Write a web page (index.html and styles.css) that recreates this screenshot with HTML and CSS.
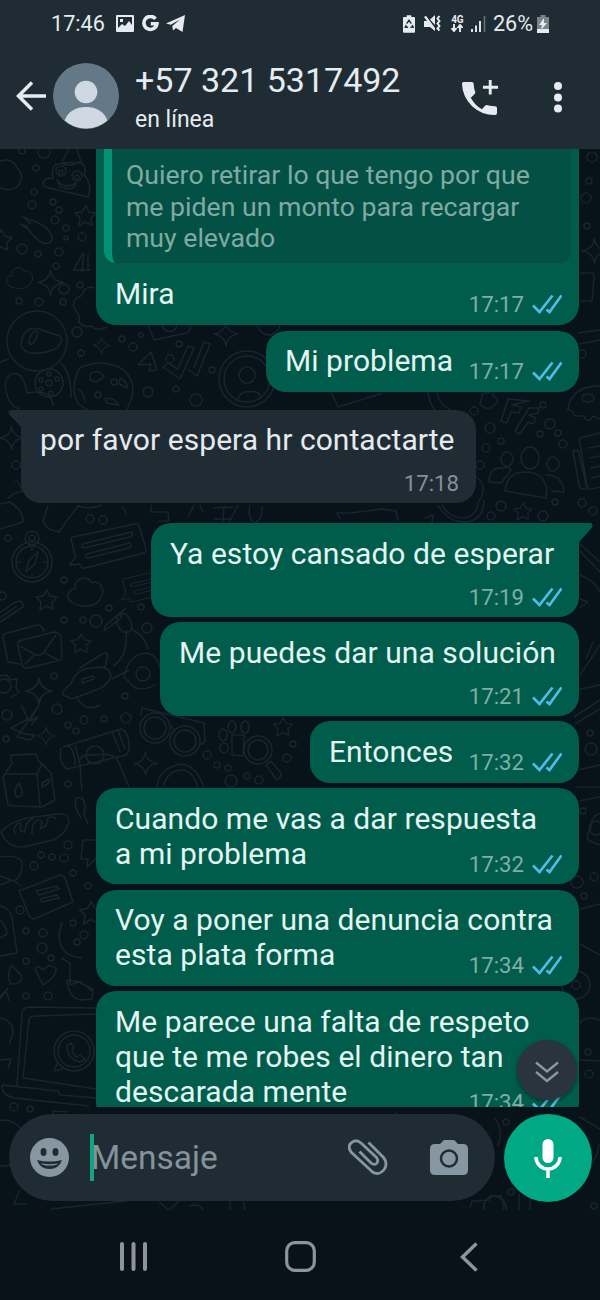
FILE: index.html
```html
<!DOCTYPE html>
<html lang="es">
<head>
<meta charset="utf-8">
<title>Chat</title>
<link rel="stylesheet" href="styles.css">
</head>
<body>
<svg class="defs" width="0" height="0" aria-hidden="true">
  <defs>
    <symbol id="ticks" viewBox="0 0 30 20"><path d="M1 11.500 7.500 18 20.500 1.500M14.500 15.500l3 2.500L29.500 1.500" fill="none" stroke="currentColor" stroke-width="2.700"/></symbol>
    <symbol id="spark" viewBox="-12 -12 24 24" overflow="visible"><path d="M0-12Q1-2 12 0Q1 2 0 12Q-1 2-12 0Q-1-2 0-12Z"/></symbol>
    <symbol id="star" viewBox="-10 -10 20 20" overflow="visible"><path d="M1-10 4-4 11-3 6 2 7 9 0 6-6 10-5 2-10-3-3-4Z"/></symbol>
    <symbol id="cloud" viewBox="0 0 38 32" overflow="visible"><path d="M8 28C-3 25-1 12 8 12 6 1 21-3 25 6 36 3 39 17 34 22 29 31 17 32 8 28Z"/></symbol>
    <symbol id="note" viewBox="0 0 80 48" overflow="visible"><path d="M6 14Q3 14 4 18L8 34 2 42 12 41Q14 46 18 45L76 30Q80 29 78 24L72 4Q71 0 67 1ZM15 21 64 9Q67 13 62 14L17 25Q12 24 15 21ZM19 31 62 20Q66 23 61 25L21 35Q16 34 19 31Z"/></symbol>
    <symbol id="compass" viewBox="0 0 40 50" overflow="visible"><circle cx="20" cy="30" r="20"/><circle cx="20" cy="30" r="16"/><circle cx="20" cy="6" r="7"/><circle cx="20" cy="6" r="3"/><path d="M26 20 23 32 14 40 17 28ZM20 15v4M20 41v4M5 30h4M31 30h4"/></symbol>
  </defs>
</svg>
<div class="phone">
  <header class="top">
    <div class="status">
      <div class="status-left">
        <span>17:46</span>
        <svg width="18" height="17" viewBox="0 0 18 17"><path fill="currentColor" fill-rule="evenodd" d="M1 0h16q1 0 1 1v15q0 1-1 1H1q-1 0-1-1V1Q0 0 1 0ZM2 2v11l4-4 3 2 4-5 3 4V2ZM4 4h3v3H4Z"/></svg>
        <svg class="g-icon" width="17" height="17" viewBox="0 0 17 17"><path fill="none" stroke="currentColor" stroke-width="3.600" d="M13.500 3.800A6.500 6.500 0 1 0 14.900 8.800H8.800"/></svg>
        <svg class="plane" width="19" height="17" viewBox="0 0 19 17"><path fill="currentColor" d="M0 8.500 19 0 16.500 17 10 13 7 15.500 6.300 11 14 4.500 4.800 9.800Z"/></svg>
      </div>
      <div class="status-right">
        <svg width="12" height="18" viewBox="0 0 13 19"><path fill="currentColor" d="M4 0h5v2h3q1 0 1 1v15q0 1-1 1H1q-1 0-1-1V3q0-1 1-1h3Z"/><path fill="none" stroke="#202c33" stroke-width="1.500" d="M4 9 6.500 5.500 9 9M10 10.500 11 13H8M5.500 13H2.500L3.500 10.500"/></svg>
        <svg class="mute" width="18" height="18" viewBox="0 0 18 18"><path fill="currentColor" d="M0 6h3L0 2 2 .8 11 13V16L6 12H0ZM6 4.500 11 0V10Z"/><path d="m15.500 1-2 2.500 2 2.500-2 2.500 2 2.500-2 2.500 2 2" fill="none" stroke="currentColor" stroke-width="2"/></svg>
        <div class="network"><span>4G</span><svg width="12" height="8" viewBox="0 0 12 8"><path d="M3 0v6M.5 4 3 7 5.500 4M9 8V2M6.500 4 9 1l2.500 3" fill="none" stroke="currentColor" stroke-width="1.900"/></svg></div>
        <svg class="signal" width="15" height="16" viewBox="0 0 15 16"><path d="M1 13v3M5 9.500V16M9 5V16" stroke="currentColor" stroke-width="1.900"/><path d="M13.500 0v16" stroke="#68737a" stroke-width="1.500"/></svg>
        <span class="battery-text">26%</span>
        <svg width="12" height="18" viewBox="0 0 12 18"><path fill="#78838a" d="M3.500 0h5v2H12v16H0V2h3.500Z"/><path fill="currentColor" d="M0 14h12v4H0ZM7 3 2 10h3l-1 5 6-7H7Z"/></svg>
      </div>
    </div>
    <div class="contact">
      <svg class="back" width="30" height="30" viewBox="0 0 30 30"><path d="M16 1.500 2.500 15 16 28.500M2.500 15H30" fill="none" stroke="currentColor" stroke-width="3.500"/></svg>
      <svg class="avatar" width="66" height="66" viewBox="0 0 66 66"><circle cx="33" cy="33" r="33" fill="#647987"/><circle cx="33" cy="29" r="11.300" fill="#d0d9e1"/><path d="M11.500 57.500Q17 44 33 44T54.500 57.500A33 33 0 0 1 11.500 57.500Z" fill="#d0d9e1"/></svg>
      <div class="identity"><h1>+57 321 5317492</h1><p>en línea</p></div>
      <svg class="call" width="36" height="36" viewBox="0 0 37 37"><path fill="currentColor" d="M1.500 2H10Q12 2 12 4 12 8 13.500 12 14 13.300 13 14.300L9 18.300Q14 27 20.500 30L24 26.300Q25 25.500 26.500 26 30 27 34 27 36 27 36 29V34Q36 36 34 36A33 33 0 0 1 0 4Q0 2 1.500 2Z"/><path d="M29 0V15M21.500 7.500H37" stroke="currentColor" stroke-width="3"/></svg>
      <svg class="more" width="8" height="31" viewBox="0 0 8 31"><g fill="currentColor"><circle cx="4" cy="4" r="4"/><circle cx="4" cy="15.500" r="4"/><circle cx="4" cy="26.500" r="4"/></g></svg>
    </div>
  </header>

  <main class="chat">
    <svg class="wallpaper" width="600" height="1061" viewBox="0 149 600 1061" aria-hidden="true">
      <path d="M0 161Q13 157 17 168 26 176 17 187 10 192 0 188M62 162 69 149M81 162 77 149M61 163Q70 168 81 161M54 166Q60 161 82 163 87 169 84 174 93 187 88 197L45 187Q40 181 49 178 56 180 52 174ZM57 180Q65 190 76 183Q74 192 60 187Z"/>
      <circle cx="61" cy="171" r="5"/><circle cx="77" cy="176" r="5"/><circle cx="61" cy="172" r="2"/><circle cx="77" cy="177" r="2"/>
      <path d="M22 217 34 221Q48 226 52 236 53 245 43 243 34 238 29 230L20 224 28 227M24 217 31 224M83 253Q77 263 74 270H91M84 253 82 272M88 254V270"/>
      <use href="#star" x="-11" y="230" width="23" height="21"/><use href="#star" x="75" y="206" width="20" height="20"/><use href="#cloud" x="6" y="267" width="28" height="23"/>
      <use href="#spark" x="38" y="270" width="25" height="25"/><use href="#spark" x="93" y="337" width="17" height="17"/><use href="#spark" x="214" y="322" width="24" height="24"/><use href="#spark" x="582" y="238" width="25" height="26"/>
      <circle cx="37" cy="341" r="30"/><path d="M24 334Q31 325 44 331L60 336Q64 340 57 348 46 354 31 353 16 350 24 334M29 344Q29 335 35 331 40 331 36 338Q34 345 29 344M0 362 9 359M60 363Q71 370 71 398M5 384Q8 371 18 374 25 379 27 393 52 388 53 406M5 384Q7 406 20 409"/>
      <circle cx="49" cy="383" r="14"/><circle cx="49" cy="383" r="3"/><circle cx="49" cy="374" r="2"/><circle cx="41" cy="380" r="2"/><circle cx="41" cy="389" r="2"/><circle cx="51" cy="393" r="2"/><circle cx="57" cy="379" r="2"/>
      <path d="M77 374Q78 366 89 365 99 361 113 365 123 367 130 378 136 390 130 402L127 410M77 374Q71 388 77 402 85 410 89 410M90 374Q99 368 104 377L96 382 90 380ZM120 378Q128 382 127 388L119 384ZM105 399Q113 396 119 405L107 403ZM78 389Q84 393 85 402"/>
      <circle cx="98" cy="395" r="3"/><circle cx="114" cy="382" r="3"/><path d="M95 288Q88 286 84 290 83 297 76 298 71 305 76 311 80 315 79 322 83 328 91 326 98 332 107 327M148 325 154 340 186 333Q192 331 190 325M162 325Q164 333 173 331 178 328 176 323M138 365 151 352 157 370 149 371 151 364ZM163 367 180 379 194 348 188 346 178 369 168 363ZM187 369 197 376 210 344 204 342 194 368M257 325Q261 336 271 335 279 331 280 325"/>
      <circle cx="247" cy="379" r="28"/><circle cx="247" cy="379" r="23"/><circle cx="247" cy="375" r="8"/><path d="M237 402Q240 390 248 392 260 390 261 398"/>
      <path d="M580 273H591Q595 273 594 277L592 301H580M578 333 600 330M579 344 600 340M331 392 338 407 383 393M428 392Q430 415 456 423M437 392Q439 405 451 410M483 393 480 404Q488 412 495 405 501 399 492 396 498 388 488 393ZM508 399 501 421 507 423 511 412 519 413 521 407 512 405 529 401ZM529 408 515 431 520 434 528 422 533 424 536 418 529 415 538 413 539 408ZM568 409Q571 386 600 386M567 409Q574 410 575 416L584 416Q588 425 593 416L600 419"/>
      <ellipse cx="588" cy="398" rx="6" ry="4"/>
      <use href="#spark" x="0" y="424" width="23" height="28"/><path d="M15 480Q21 484 22 491 10 494 8 499M0 504 10 502Q24 511 23 522L0 529M48 505 43 521Q46 530 59 532 69 517 79 505M77 506Q91 510 102 505M122 506 127 515M151 505V512L168 512 169 521 159 521M194 505 188 517M200 505 203 512M213 508 233 507M214 519H232M224 506 223 522M238 505 229 522M250 505Q247 519 255 523 263 519 262 506"/>
      <use href="#compass" x="12" y="532" width="40" height="50"/><use href="#note" x="66" y="523" width="83" height="48"/><use href="#note" x="110" y="568" width="80" height="36"/><use href="#cloud" x="67" y="577" width="38" height="31"/><use href="#star" x="36" y="590" width="20" height="20"/><use href="#star" x="71" y="634" width="19" height="19"/>
      <path d="M0 613 15 602Q24 599 23 607L0 622M0 618 17 606M4 634 37 625Q42 624 44 632M4 634Q2 637 4 642L8 662 20 664M19 641 54 632Q60 632 61 638L62 656Q62 660 57 661L28 668Q23 669 22 664L18 647Q17 642 20 641ZM20 646 36 655Q41 656 44 652L56 635M25 664 34 655M45 653 58 660"/>
      <path d="M104 631 121 618Q120 613 126 608L105 626ZM117 616Q128 608 132 627 131 634 123 632 116 627 117 616ZM126 630Q128 657 113 666M132 629Q146 637 148 650M80 668 99 656Q109 649 107 658L105 668M71 684Q76 668 93 668 110 665 111 676 108 686 96 690L72 699 63 695Q62 690 71 684ZM82 679 93 676Q96 678 91 680L82 683ZM112 679 129 670M124 677Q128 654 147 653 157 655 160 668M124 677 134 687Q144 692 156 684"/>
      <circle cx="143" cy="674" r="7"/><circle cx="4" cy="686" r="7"/><path d="m0 676 7-1 3 5 7-1-1 9 3 4-8 6"/>
      <use href="#spark" x="26" y="678" width="26" height="26"/><use href="#spark" x="37" y="727" width="18" height="18"/><use href="#spark" x="134" y="752" width="23" height="23"/>
      <path d="M21 705 28 719 11 728 25 734 35 735 30 740 17 737 39 705 30 721 38 717 31 725M11 761V755L36 754 38 760 51 773 55 800 42 807 14 806 8 805 3 777 12 763ZM4 774H37L40 806M37 774 42 764M42 783 49 779 49 783 42 787ZM19 783Q12 792 17 797 26 797 19 783M63 747 121 729Q130 732 129 751L126 755 67 769Q58 762 61 748M68 746Q75 749 75 765M75 745 80 764M112 731 120 752M118 730 125 749M76 696Q84 713 100 705"/>
      <circle cx="155" cy="728" r="15"/><circle cx="155" cy="728" r="11"/><circle cx="185" cy="741" r="15"/><circle cx="185" cy="741" r="11"/><path d="M141 716 142 708 204 723 205 742 199 745M170 726Q174 727 174 733M79 763Q79 753 97 755 115 752 119 763L129 787M80 764 82 791M76 798H82Q87 804 84 814L88 824M76 798Q73 807 82 819"/>
      <circle cx="95" cy="755" r="9"/><circle cx="258" cy="750" r="14"/><circle cx="258" cy="750" r="10"/><path d="M266 765 271 761 281 773Q281 780 276 779ZM232 735 244 735 243 756 232 755Z"/><ellipse cx="223" cy="735" rx="4" ry="6"/><ellipse cx="224" cy="748" rx="4" ry="5"/><ellipse cx="232" cy="727" rx="4" ry="6"/><ellipse cx="245" cy="727" rx="4" ry="6"/>
      <path d="M157 787Q158 769 180 764 196 765 204 787M163 787Q168 769 184 770 194 773 198 787M1 832Q8 823 27 818L58 814Q70 813 69 822 66 834 53 840L24 847Q7 848 1 832ZM15 835Q12 824 21 823L20 829Q21 832 25 832 25 821 34 818M32 835Q31 824 37 820 45 819 40 829Q48 827 48 818 51 815 56 819M0 857Q17 854 22 862 23 876 14 881L21 886M0 876 14 881M0 885 11 881M96 840H83L81 859 88 859 87 867 97 857M19 891 60 875Q64 876 65 878L73 902 34 919Q31 919 29 915ZM36 891 57 886 59 889 39 895ZM40 899 57 895 59 898 42 902ZM0 906Q10 908 12 918L17 953 0 956M0 920Q6 925 7 934L0 938"/>
      <path d="M11 965Q6 977 11 984 23 985 21 975ZM35 969Q37 964 43 970 50 962 56 969 57 976 43 985ZM62 922 59 935Q59 956 82 958M61 958 70 963 70 985 79 982 94 990M0 999 8 988M0 997Q7 986 9 1001M67 980Q69 999 81 1000L92 999 93 992 81 982ZM96 1008 28 1007Q22 1008 22 1014L17 1086M96 1014 36 1016Q29 1016 29 1020L23 1078 96 1089M2 1085 58 1091 60 1095 96 1098M2 1085Q1 1095 14 1098L89 1106M0 1018Q14 1021 13 1034L9 1044M0 1060 11 1059 8 1069"/>
      <circle cx="74" cy="1051" r="20"/><circle cx="74" cy="1051" r="16"/><path d="M54 1071 58 1061M54 1071 63 1069M67 1046Q67 1059 80 1062L85 1059 80 1055 77 1057Q72 1054 72 1050L74 1047 71 1043Z"/>
      <circle cx="3" cy="1143" r="23"/><path d="M53 1115V1111L67 1112M76 1115 84 1114M14 1204 20 1190M14 1204H27M51 1209 126 1201M159 1202 169 1210 179 1201M189 1206Q200 1203 203 1210M230 1201V1210M243 1201 245 1210"/>
      <path d="M442 505Q450 519 465 518 478 514 478 503 489 486 476 477M438 505Q447 522 466 522 484 520 484 500M489 482Q489 467 503 468 509 466 511 470L501 483ZM505 491Q507 471 526 472 543 472 547 489L546 498ZM545 475Q562 474 564 492L551 491"/>
      <ellipse cx="507" cy="459" rx="6" ry="7"/><ellipse cx="530" cy="458" rx="9" ry="11"/><ellipse cx="553" cy="464" rx="6" ry="7"/>
      <path d="M600 433 583 437Q578 438 580 444L587 486Q588 490 592 489L600 487M573 451 578 450 587 488 583 489Q580 489 579 485ZM588 448 600 446M589 458 600 456M590 468 600 466M591 478 600 476"/><use href="#star" x="514" y="503" width="17" height="17"/>
      <path d="M340 519 337 513 350 513 382 509 396 511 398 521M425 518 433 515 432 523M580 544 600 562M580 551 600 572M580 575Q596 581 600 592M580 599 588 602 580 608M600 645 580 675M593 642 586 659M580 689 600 685M575 724 600 709M574 717 600 700M578 770 600 765M576 787H600M579 801 600 797M600 813Q590 817 591 829 585 834 589 841L600 845M580 909 600 904M580 944 600 955"/>
      <circle cx="596" cy="828" r="7"/><circle cx="576" cy="985" r="14"/><circle cx="576" cy="985" r="4"/><path d="M580 1023Q586 1015 600 1020M580 1060 600 1061M580 1117 600 1129M599 1145Q597 1161 587 1168M470 1208 472 1201 490 1200V1196H501L505 1203 507 1210M519 1210V1194M530 1198V1210M396 1112Q397 1120 408 1117 411 1124 424 1120M494 1118Q504 1127 498 1146"/>
      <circle cx="494" cy="1206" r="10"/>
      <g class="dots">
        <circle cx="44" cy="152" r="6"/><circle cx="22" cy="151" r="3"/><circle cx="36" cy="168" r="3"/><circle cx="34" cy="192" r="3"/><circle cx="32" cy="205" r="4"/><circle cx="53" cy="202" r="3"/><circle cx="59" cy="210" r="3"/><circle cx="55" cy="220" r="4"/><circle cx="66" cy="228" r="3"/><circle cx="66" cy="238" r="2"/><circle cx="82" cy="237" r="4"/><circle cx="22" cy="249" r="5"/><circle cx="38" cy="254" r="3"/><circle cx="59" cy="252" r="4"/><circle cx="56" cy="266" r="3"/><circle cx="64" cy="289" r="5"/><circle cx="80" cy="285" r="3"/><circle cx="19" cy="301" r="3"/><circle cx="39" cy="302" r="4"/><circle cx="63" cy="302" r="3"/><circle cx="77" cy="332" r="5"/><circle cx="122" cy="339" r="3"/><circle cx="133" cy="347" r="4"/><circle cx="141" cy="335" r="2"/><circle cx="81" cy="353" r="3"/><circle cx="179" cy="344" r="3"/><circle cx="170" cy="359" r="4"/><circle cx="212" cy="370" r="3"/><circle cx="148" cy="392" r="5"/><circle cx="176" cy="389" r="3"/><circle cx="196" cy="400" r="6"/><circle cx="592" cy="157" r="5"/><circle cx="589" cy="181" r="3"/><circle cx="586" cy="198" r="5"/><circle cx="587" cy="226" r="3"/><circle cx="582" cy="354" r="4"/><circle cx="474" cy="411" r="4"/><circle cx="490" cy="428" r="5"/><circle cx="486" cy="448" r="4"/><circle cx="501" cy="441" r="3"/><circle cx="540" cy="434" r="3"/><circle cx="550" cy="424" r="5"/><circle cx="558" cy="433" r="3"/><circle cx="563" cy="444" r="4"/><circle cx="543" cy="405" r="3"/><circle cx="480" cy="465" r="4"/><circle cx="501" cy="506" r="5"/><circle cx="555" cy="502" r="3"/><circle cx="582" cy="503" r="4"/><circle cx="593" cy="511" r="4"/><circle cx="491" cy="516" r="4"/><circle cx="543" cy="516" r="5"/>
        <circle cx="16" cy="465" r="4"/><circle cx="90" cy="519" r="4"/><circle cx="103" cy="520" r="4"/><circle cx="8" cy="538" r="3"/><circle cx="64" cy="580" r="3"/><circle cx="2" cy="596" r="4"/><circle cx="109" cy="608" r="3"/><circle cx="141" cy="607" r="3"/><circle cx="64" cy="620" r="3"/><circle cx="83" cy="620" r="3"/><circle cx="96" cy="621" r="6"/><circle cx="147" cy="628" r="5"/><circle cx="54" cy="676" r="3"/><circle cx="125" cy="696" r="3"/><circle cx="7" cy="715" r="5"/><circle cx="6" cy="739" r="3"/><circle cx="57" cy="709" r="5"/><circle cx="84" cy="720" r="4"/><circle cx="68" cy="725" r="3"/><circle cx="76" cy="731" r="3"/><circle cx="104" cy="719" r="3"/><circle cx="126" cy="718" r="5"/><circle cx="68" cy="784" r="3"/><circle cx="207" cy="755" r="4"/><circle cx="217" cy="765" r="3"/><circle cx="228" cy="768" r="3"/><circle cx="231" cy="781" r="6"/><circle cx="247" cy="776" r="3"/><circle cx="259" cy="780" r="4"/><circle cx="287" cy="758" r="4"/><circle cx="293" cy="744" r="3"/><circle cx="68" cy="845" r="4"/><circle cx="41" cy="855" r="3"/><circle cx="52" cy="857" r="3"/><circle cx="64" cy="858" r="4"/><circle cx="34" cy="866" r="4"/><circle cx="73" cy="873" r="3"/><circle cx="88" cy="886" r="3"/><circle cx="20" cy="910" r="4"/><circle cx="26" cy="931" r="3"/><circle cx="43" cy="933" r="4"/><circle cx="73" cy="923" r="3"/><circle cx="84" cy="935" r="4"/><circle cx="77" cy="942" r="3"/><circle cx="42" cy="948" r="5"/><circle cx="51" cy="958" r="3"/><circle cx="26" cy="961" r="3"/><circle cx="48" cy="996" r="4"/><circle cx="26" cy="996" r="3"/><circle cx="14" cy="1107" r="4"/><circle cx="30" cy="1109" r="3"/><circle cx="591" cy="749" r="6"/><circle cx="590" cy="733" r="3"/><circle cx="583" cy="811" r="3"/><circle cx="594" cy="877" r="4"/><circle cx="577" cy="882" r="6"/><circle cx="584" cy="896" r="3"/><circle cx="588" cy="1052" r="3"/><circle cx="589" cy="1074" r="4"/><circle cx="506" cy="1122" r="3"/><circle cx="511" cy="1192" r="3"/><circle cx="594" cy="1206" r="3"/>
      </g>
      <use href="#star" x="273" y="718" width="19" height="18"/><use href="#star" x="79" y="902" width="23" height="22"/>
    </svg>

    <section class="messages">
      <article class="bubble out reply">
        <blockquote>Quiero retirar lo que tengo por que<br>me piden un monto para recargar<br>muy elevado</blockquote>
        <div class="row"><p>Mira</p><div class="meta">17:17<svg><use href="#ticks"/></svg></div></div>
      </article>
      <article class="bubble out row problem"><p>Mi problema</p><div class="meta">17:17<svg><use href="#ticks"/></svg></div></article>
      <article class="bubble in stack"><svg class="tail" width="16" height="24" viewBox="0 0 16 24"><path d="M3 0H16V24L13 17 1.500 5Q-1 1 3 0Z" fill="currentColor"/></svg><p>por favor espera hr contactarte</p><div class="meta">17:18</div></article>
      <article class="bubble out stack first"><svg class="tail" width="16" height="24" viewBox="0 0 16 24"><path d="M0 0H14Q17 2 14.500 5L3 18 0 24Z" fill="currentColor"/></svg><p>Ya estoy cansado de esperar</p><div class="meta">17:19<svg><use href="#ticks"/></svg></div></article>
      <article class="bubble out stack solution"><p>Me puedes dar una solución</p><div class="meta">17:21<svg><use href="#ticks"/></svg></div></article>
      <article class="bubble out row then"><p>Entonces</p><div class="meta">17:32<svg><use href="#ticks"/></svg></div></article>
      <article class="bubble out row wide"><p>Cuando me vas a dar respuesta<br>a mi problema</p><div class="meta">17:32<svg><use href="#ticks"/></svg></div></article>
      <article class="bubble out row wide"><p>Voy a poner una denuncia contra<br>esta plata forma</p><div class="meta">17:34<svg><use href="#ticks"/></svg></div></article>
      <article class="bubble out row wide"><p>Me parece una falta de respeto<br>que te me robes el dinero tan<br>descarada mente</p><div class="meta">17:34<svg><use href="#ticks"/></svg></div></article>
    </section>
    <button class="jump" aria-label="Ir al final"><svg width="24" height="22" viewBox="0 0 24 22"><path d="m1 1.500 11 9 11-9M1 11l11 9 11-9" fill="none" stroke="currentColor" stroke-width="2.300"/></svg></button>

    <footer class="composer">
      <div class="field">
        <svg class="smile" width="39" height="39" viewBox="0 0 39 39"><circle cx="19.500" cy="19.500" r="19.500" fill="currentColor"/><ellipse cx="13.500" cy="14" rx="3" ry="4" fill="#202c33"/><ellipse cx="25.500" cy="14" rx="3" ry="4" fill="#202c33"/><path d="M7 22Q19.500 25 32 22 29 31 19.500 31T7 22Z" fill="#202c33"/><path d="M11 25.500Q19.500 27 28 25.500 26 27.500 19.500 27.500T11 25.500Z" fill="currentColor"/></svg>
        <div class="input">Mensaje</div>
        <svg class="clip" width="40" height="37" viewBox="0 0 40 37"><path d="M20.500 3.500 35.500 18.500Q40 24 36.500 30 31 37 24.500 33L3.500 13.500Q-1 8 3 4 8-.5 13 4L28.500 18.500Q31 22 28.500 24.500 26 26.500 23 24L11.500 12.500" fill="none" stroke="currentColor" stroke-width="2.800"/></svg>
        <svg class="camera" width="38" height="35" viewBox="0 0 38 35"><path fill="currentColor" d="M15 0H23Q25 0 26 2L28 4H33Q38 4 38 9V30Q38 35 33 35H5Q0 35 0 30V9Q0 4 5 4H10L12 2Q13 0 15 0Z"/><circle cx="19" cy="18.500" r="8" fill="none" stroke="#202c33" stroke-width="2.500"/></svg>
      </div>
      <button class="mic" aria-label="Grabar"><svg width="28" height="39" viewBox="0 0 28 39"><rect x="8.500" width="11" height="24" rx="5.500" fill="currentColor"/><path d="M2 18A12 12 0 0 0 26 18M14 30V39" fill="none" stroke="currentColor" stroke-width="3.500"/></svg></button>
    </footer>
  </main>

  <nav class="system">
    <svg width="27" height="29" viewBox="0 0 27 29"><path d="M2 2V27M13.500 2V27M25 2V27" stroke="currentColor" stroke-width="4" stroke-linecap="round"/></svg>
    <svg class="home" width="31" height="31" viewBox="0 0 31 31"><rect x="1.700" y="1.700" width="27.600" height="27.600" rx="8" fill="none" stroke="currentColor" stroke-width="3.200"/></svg>
    <svg width="18" height="30" viewBox="0 0 18 30"><path d="M16.500 1.500 2.500 15 16.500 28.500" fill="none" stroke="currentColor" stroke-width="3.500"/></svg>
  </nav>
</div>
</body>
</html>
```
FILE: styles.css
```css
* { box-sizing: border-box; }
body, h1, p, blockquote { margin: 0; }
body { background: #091219; font-family: Roboto, "Liberation Sans", sans-serif; }
svg { display: block; flex: none; }
button { border: 0; padding: 0; font: inherit; }
.defs { position: absolute; }
.phone { width: 600px; height: 1300px; display: flex; flex-direction: column; overflow: hidden; }

.top { height: 149px; background: #202c33; color: #e5ebf0; }
.status { height: 47px; padding: 0 50px 0 51px; display: flex; justify-content: space-between; align-items: center; font-size: 21.600px; }
.status-left, .status-right { display: flex; align-items: center; }
.status-left svg { margin-left: 11px; }
.status-left .g-icon { margin-left: 8px; }
.status-left .plane { margin-left: 7px; }
.mute { margin-left: 9px; }
.network { margin-left: 9px; width: 13px; display: flex; flex-direction: column; align-items: center; font-size: 10px; line-height: 9px; font-weight: 700; }
.signal { margin-left: 7px; }
.battery-text { margin: 0 4px 0 7px; }
.status-right { margin-right: 1px; }
.contact { height: 102px; padding-left: 16px; display: flex; align-items: flex-start; }
.back { margin-top: 34px; }
.avatar { margin: 16px 0 0 7px; }
.identity { width: 327px; margin: 13px 0 0 16px; }
.identity h1 { font-size: 34px; font-weight: 400; line-height: 40px; white-space: nowrap; }
.identity p { font-size: 23px; line-height: 28px; margin-top: 6px; }
.call { margin-top: 33px; }
.more { margin: 35px 0 0 56px; }

.chat { height: 1061px; position: relative; background: #071219; }
.wallpaper { position: absolute; left: 0; top: 0; fill: none; stroke: #19252c; stroke-width: 1.500; stroke-linejoin: round; }

.messages { position: relative; height: 958px; padding: 0 21px; overflow: hidden; display: flex; flex-direction: column; align-items: flex-end; }
.bubble { position: relative; flex: none; border-radius: 20px; padding: 12.500px 17px 13.500px 19px; margin-bottom: 5.500px; }
.bubble p { font-size: 30px; line-height: 35px; white-space: nowrap; letter-spacing: .06px; }
.out { background: #005d4b; color: #e3f4f1; }
.in { align-self: flex-start; background: #202c33; color: #e5eaee; }
.row { display: flex; justify-content: space-between; align-items: flex-end; }
.row > p { width: 0; }
.meta { display: flex; align-items: center; font-size: 22.200px; line-height: 24px; color: #80aea6; margin-bottom: -5px; }
.meta svg { width: 30px; height: 20px; margin-left: 8px; color: #51bbe7; }
.in .meta { color: #85919a; }
.reply { width: 483px; height: 176px; padding: 0 8px; border-radius: 0 0 20px 20px; }
.reply blockquote { height: 114px; padding: 11px 0 0 14px; border-left: 8px solid #029172; border-radius: 0 0 12px 12px; background: #025144; color: #80aaa2; font-size: 26.650px; line-height: 31.700px; white-space: nowrap; }
.reply .row { padding: 13px 9px 0 11px; }
.problem { width: 313px; height: 61px; margin-bottom: 18px; }
.stack { height: 93.500px; display: flex; flex-direction: column; }
.stack .meta { align-self: flex-end; margin-top: 14px; }
.in.stack { width: 455px; margin-bottom: 20px; border-top-left-radius: 0; }
.first { width: 428px; border-top-right-radius: 0; }
.solution { width: 419px; }
.then { width: 269px; height: 61.500px; }
.wide { width: 483px; }
.tail { position: absolute; top: 0; }
.in .tail { left: -13px; color: #202c33; }
.out .tail { right: -14px; color: #005d4b; }
.jump { position: absolute; left: 517px; top: 891px; width: 60px; height: 60px; border-radius: 50%; background: #29343c; color: #8999a3; display: grid; place-items: center; padding-top: 4px; box-shadow: 0 2px 4px #0006; }

.composer { position: relative; display: flex; padding: 7px 8px 0 9px; gap: 9px; }
.field { width: 486px; height: 87px; border-radius: 44px; background: #202c33; color: #8797a2; padding: 0 27px 0 21px; display: flex; align-items: center; }
.input { width: 258px; height: 47px; margin-left: 21px; border-left: 4px solid #10a480; color: #84929c; font-size: 33.500px; line-height: 48px; text-indent: -3px; }
.clip { margin-left: 0; }
.camera { margin-left: 42px; }
.mic { width: 88px; height: 88px; border-radius: 50%; background: #00a884; color: #fff; display: grid; place-items: center; }
.system { height: 90px; background: #0a1219; color: #909499; display: flex; align-items: center; padding: 3px 122px 0 120px; justify-content: space-between; }
.home { margin: 0 3px 0 -3px; }
```
